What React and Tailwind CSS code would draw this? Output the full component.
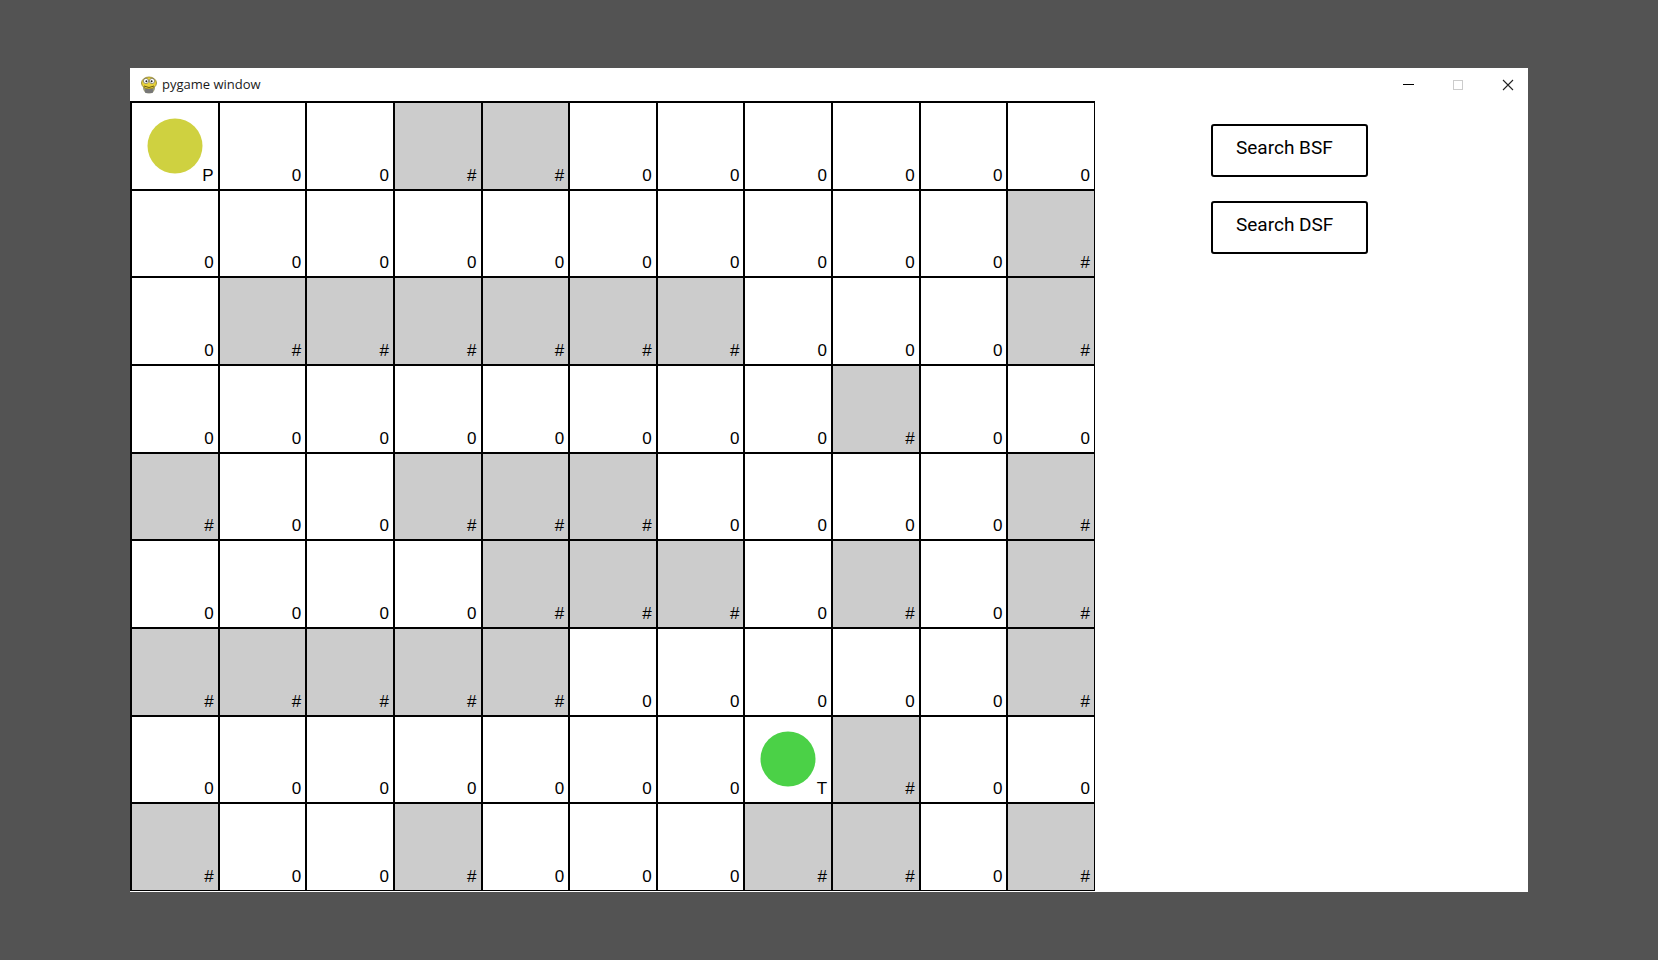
import React from "react";

const GRID = [
  "P00##000000",
  "0000000000#",
  "0######000#",
  "00000000#00",
  "#00###0000#",
  "0000###0#0#",
  "#####00000#",
  "0000000T#00",
  "#00#000##0#",
];

function PygameIcon() {
  return (
    <svg width="18" height="20" viewBox="0 0 18 20">
      <ellipse cx="9" cy="13" rx="6" ry="5.5" fill="#9a9a7a" />
      <ellipse cx="9" cy="8" rx="7.5" ry="6" fill="#e8d23a" stroke="#8a7a20" strokeWidth="0.8" />
      <circle cx="6" cy="6" r="2.6" fill="#fff" stroke="#555" strokeWidth="0.6" />
      <circle cx="12" cy="6" r="2.6" fill="#fff" stroke="#555" strokeWidth="0.6" />
      <circle cx="6.4" cy="6.3" r="1" fill="#222" />
      <circle cx="11.6" cy="6.3" r="1" fill="#222" />
      <path d="M4 11 Q9 14 14 11" stroke="#6a5a10" strokeWidth="1" fill="none" />
      <rect x="5" y="14" width="8" height="4" rx="1" fill="#777" />
    </svg>
  );
}

function Cell({ ch }) {
  const wall = ch === "#";
  return (
    <div className={`relative ${wall ? "bg-[#cccccc]" : "bg-white"}`}>
      {ch === "P" && (
        <div className="absolute left-1/2 top-1/2 h-[55px] w-[55px] -translate-x-1/2 -translate-y-1/2 rounded-full bg-[#cfd140]" />
      )}
      {ch === "T" && (
        <div className="absolute left-1/2 top-1/2 h-[55px] w-[55px] -translate-x-1/2 -translate-y-1/2 rounded-full bg-[#4bd147]" />
      )}
      <span className="absolute bottom-[5px] right-[4px] text-[17px] leading-none text-black [font-family:'Liberation_Sans',sans-serif]">
        {ch}
      </span>
    </div>
  );
}

export default function App() {
  return (
    <div className="h-[960px] w-[1658px] bg-[#535353] pl-[130px] pt-[68px]">
      <div className="flex h-[824px] w-[1398px] flex-col bg-white">
        <div className="flex h-[33px] shrink-0 items-center">
          <div className="ml-[10px] flex w-[22px] items-center">
            <PygameIcon />
          </div>
          <span className="text-[13px] text-[#1a1a1a] [font-family:'Open_Sans',sans-serif]">pygame window</span>
          <div className="ml-auto flex items-center gap-[38px] pr-[14px]">
            <div className="flex h-[12px] w-[12px] items-center justify-center">
              <div className="h-px w-[11px] bg-black" />
            </div>
            <div className="flex h-[12px] w-[12px] items-center justify-center">
              <div className="h-[10px] w-[10px] border border-[#cccccc]" />
            </div>
            <div className="flex h-[12px] w-[12px] items-center justify-center">
              <svg width="12" height="12" viewBox="0 0 12 12">
                <path d="M1 1 L11 11 M11 1 L1 11" stroke="#222" strokeWidth="1.1" />
              </svg>
            </div>
          </div>
        </div>
        <div className="flex">
          <div className="grid h-[790px] w-[965px] grid-cols-11 grid-rows-9 gap-[2px] bg-black pb-px pl-[2px] pr-px pt-[2px]">
            {GRID.map((row, r) =>
              row.split("").map((ch, c) => <Cell key={`${r}-${c}`} ch={ch} />)
            )}
          </div>
          <div className="ml-[116px] mt-[23px] flex flex-col gap-[24px]">
            <div className="flex h-[53px] w-[157px] items-center rounded-[3px] border-2 border-black pb-[4px] pl-[23px] text-[19px] text-black [font-family:Roboto,sans-serif]">
              Search BSF
            </div>
            <div className="flex h-[53px] w-[157px] items-center rounded-[3px] border-2 border-black pb-[4px] pl-[23px] text-[19px] text-black [font-family:Roboto,sans-serif]">
              Search DSF
            </div>
          </div>
        </div>
      </div>
    </div>
  );
}
